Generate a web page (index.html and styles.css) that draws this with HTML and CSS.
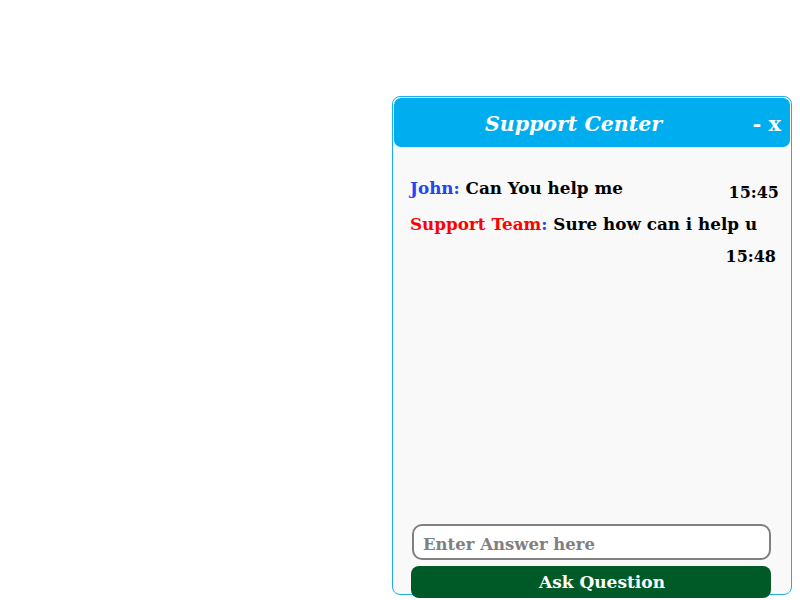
FILE: index.html
```html
<!DOCTYPE html>
<html lang="en">
  <head>
    <meta charset="UTF-8" />
    <meta name="viewport" content="width=device-width, initial-scale=1.0" />
    <title>Support Center</title>
    <link rel="stylesheet" href="styles.css">
  </head>
  <body>
    <div class="page">
      <div class="chat-box">
        <div class="chat-header">
          <span class="chat-title">Support Center</span>
          <span class="chat-controls">- x</span>
        </div>
        <div class="chat-body">
          <div class="message">
            <p class="message-text"><span class="user">John:</span> Can You help me</p>
            <span class="time time-first">15:45</span>
          </div>
          <div class="message reply">
            <p class="message-text"><span class="support">Support Team</span><span class="colon">:</span> Sure how can i help u</p>
            <span class="time">15:48</span>
          </div>
        </div>
        <div class="chat-footer">
          <input type="text" placeholder="Enter Answer here" class="answer-input" />
          <button class="ask-button">Ask Question</button>
        </div>
      </div>
    </div>
  </body>
</html>
```

FILE: styles.css
```css
body {
  margin: 0;
  background: #ffffff;
  font-family: "DejaVu Serif", "Liberation Serif", serif;
}

.page {
  display: flex;
  justify-content: flex-end;
  padding: 96px 8px 0 0;
  height: 504px;
}

.chat-box {
  width: 400px;
  height: 499px;
  border: 1px solid #1ab0ec;
  border-radius: 8px;
  background: #f9f9f9;
  display: flex;
  flex-direction: column;
  padding: 1px;
  box-sizing: border-box;
}

.chat-header {
  background: #00aeef;
  border-radius: 7px;
  height: 49px;
  display: flex;
  align-items: center;
  justify-content: center;
  position: relative;
  color: white;
}

.chat-title {
  font-style: italic;
  font-weight: bold;
  font-size: 20.5px;
  margin-left: -37px;
  margin-top: 2px;
}

.chat-controls {
  position: absolute;
  right: 9px;
  top: 13px;
  font-weight: bold;
  font-size: 21px;
}

.chat-body {
  flex: 1;
  padding: 29px 11px 0 16px;
}

.message {
  display: flex;
  justify-content: space-between;
  font-weight: bold;
  font-size: 16.8px;
}

.message-text {
  margin: 0;
  line-height: 24px;
}

.reply {
  flex-direction: column;
  margin-top: 12px;
}

.user,
.colon {
  color: #2145ee;
}

.support {
  color: #ff0000;
}

.time {
  line-height: 24px;
  align-self: flex-end;
  font-size: 16px;
}

.time-first {
  margin-top: 5px;
  margin-bottom: -5px;
}

.reply .time {
  margin-top: 9px;
  margin-right: 3px;
}

.chat-footer {
  display: flex;
  flex-direction: column;
  gap: 6px;
  padding: 0 19px 0 18px;
  margin-bottom: -5px;
}

.answer-input {
  height: 36px;
  box-sizing: border-box;
  border: 2px solid #808080;
  border-radius: 10px;
  padding: 4px 9px 0;
  font-family: "DejaVu Serif", "Liberation Serif", serif;
  font-weight: bold;
  font-size: 16.5px;
  background: white;
}

.answer-input::placeholder {
  color: #808080;
}

.ask-button {
  height: 32px;
  border: none;
  border-radius: 8px;
  background: #005a27;
  color: white;
  font-family: "DejaVu Serif", "Liberation Serif", serif;
  font-weight: bold;
  font-size: 17px;
  padding: 0 0 0 22px;
  margin-left: -1px;
  cursor: pointer;
}
```
